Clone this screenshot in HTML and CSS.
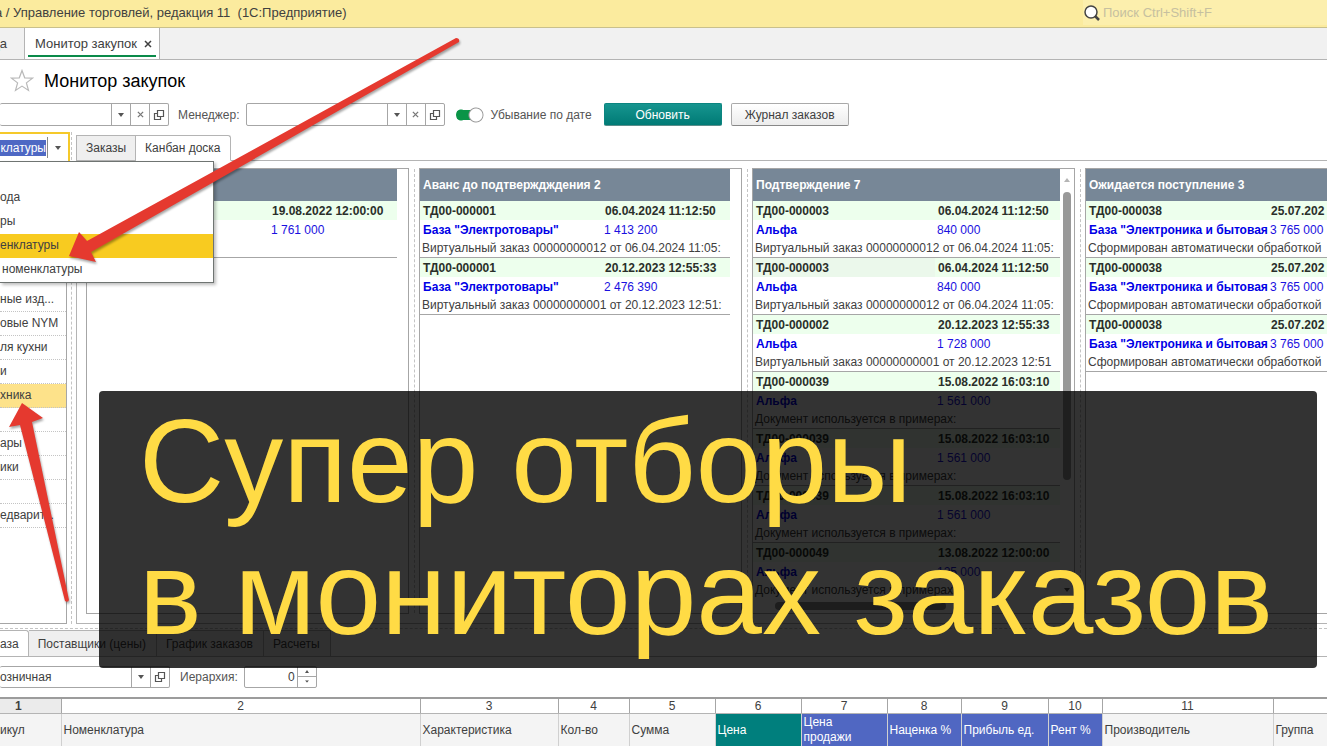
FILE: index.html
```html
<!DOCTYPE html>
<html lang="ru">
<head>
<meta charset="utf-8">
<title>Монитор закупок</title>
<link rel="stylesheet" href="styles.css">
</head>
<body>
<svg class="defs" width="0" height="0" aria-hidden="true">
  <symbol id="open" viewBox="0 0 12 12"><path d="M4.500 1.500h6v6h-6zM4 4.500H1.500v6h6V8" fill="none" stroke="#555" stroke-width="1.200"/></symbol>
  <symbol id="caret" viewBox="0 0 6 4"><path d="M0 0h6L3 4z" fill="#555"/></symbol>
  <symbol id="cross" viewBox="0 0 8 8"><path d="M1 1l6 6M7 1L1 7" stroke="currentColor" stroke-width="1.500" fill="none"/></symbol>
</svg>
<div class="app">
  <header class="titlebar">
    <span class="app-name">а / Управление торговлей, редакция 11&nbsp; (1С:Предприятие)</span>
    <label class="search">
      <svg width="18" height="18" viewBox="0 0 18 18"><circle cx="8" cy="8" r="6" fill="#fff" stroke="#444" stroke-width="1.500"/><path d="M12 12l4 4" stroke="#444" stroke-width="2.500"/></svg>
      <input type="text" placeholder="Поиск Ctrl+Shift+F" aria-label="Поиск">
    </label>
  </header>
  <nav class="windows">
    <button class="win">да</button>
    <button class="win current"><span>Монитор закупок</span><svg width="8" height="8"><use href="#cross"/></svg></button>
  </nav>
  <div class="heading">
    <svg width="24" height="24" viewBox="0 0 24 24"><path d="M12 1.500l2.700 7.300 7.800.3-6.100 4.800 2.100 7.500L12 17.100l-6.500 4.300 2.100-7.500-6.100-4.800 7.800-.3z" fill="#fff" stroke="#b9b9b9" stroke-width="1.200"/></svg>
    <h1>Монитор закупок</h1>
  </div>
  <div class="toolbar">
    <div class="combo order-combo"><input type="text" aria-label="Отбор"><button aria-label="Выбрать"><svg width="6" height="4"><use href="#caret"/></svg></button><button aria-label="Очистить"><svg width="7" height="7" viewBox="0 0 8 8"><use href="#cross"/></svg></button><button aria-label="Открыть"><svg width="12" height="12"><use href="#open"/></svg></button></div>
    <label for="manager">Менеджер:</label>
    <div class="combo manager-combo"><input type="text" id="manager"><button aria-label="Выбрать"><svg width="6" height="4"><use href="#caret"/></svg></button><button aria-label="Очистить"><svg width="7" height="7" viewBox="0 0 8 8"><use href="#cross"/></svg></button><button aria-label="Открыть"><svg width="12" height="12"><use href="#open"/></svg></button></div>
    <label class="toggle"><input type="checkbox" checked><span>Убывание по дате</span></label>
    <button class="btn primary">Обновить</button>
    <button class="btn">Журнал заказов</button>
  </div>

  <div class="work">
    <aside class="side">
      <div class="kind"><span class="picked">клатуры</span><button aria-label="Выбрать"><svg width="6" height="4"><use href="#caret"/></svg></button></div>
      <ul class="menu">
        <li></li><li>ода</li><li>ры</li><li class="on">енклатуры</li><li class="inset">номенклатуры</li>
      </ul>
      <ul class="list">
        <li>ные изд...</li><li>овые NYM</li><li>ля кухни</li><li>и</li><li class="on">хника</li><li></li><li>ары</li><li>ики</li><li></li><li>едварит...</li>
      </ul>
    </aside>
    <div class="split"></div>
    <main class="main">
      <div class="tabs"><button class="tab">Заказы</button><button class="tab current">Канбан доска</button></div>
      <div class="board">
        <section class="col">
          <div class="cards">
            <h2>&nbsp;</h2>
            <article class="card"><b></b><time>19.08.2022 12:00:00</time><strong></strong><em>1 761 000</em><p></p></article>
          </div>
        </section>
        <section class="col">
          <div class="cards">
            <h2>Аванс до подтверждждения 2</h2>
            <article class="card"><b>ТД00-000001</b><time>06.04.2024 11:12:50</time><strong>База "Электротовары"</strong><em>1 413 200</em><p>Виртуальный заказ 00000000012 от 06.04.2024 11:05:</p></article>
            <article class="card"><b>ТД00-000001</b><time>20.12.2023 12:55:33</time><strong>База "Электротовары"</strong><em>2 476 390</em><p>Виртуальный заказ 00000000001 от 20.12.2023 12:51:</p></article>
          </div>
        </section>
        <section class="col">
          <div class="cards">
            <h2>Подтверждение 7</h2>
            <article class="card"><b>ТД00-000003</b><time>06.04.2024 11:12:50</time><strong>Альфа</strong><em>840 000</em><p>Виртуальный заказ 00000000012 от 06.04.2024 11:05:</p></article>
            <article class="card active"><b>ТД00-000003</b><time>06.04.2024 11:12:50</time><strong>Альфа</strong><em>840 000</em><p>Виртуальный заказ 00000000012 от 06.04.2024 11:05:</p></article>
            <article class="card"><b>ТД00-000002</b><time>20.12.2023 12:55:33</time><strong>Альфа</strong><em>1 728 000</em><p>Виртуальный заказ 00000000001 от 20.12.2023 12:51</p></article>
            <article class="card"><b>ТД00-000039</b><time>15.08.2022 16:03:10</time><strong>Альфа</strong><em>1 561 000</em><p>Документ используется в примерах:</p></article>
            <article class="card"><b>ТД00-000039</b><time>15.08.2022 16:03:10</time><strong>Альфа</strong><em>1 561 000</em><p>Документ используется в примерах:</p></article>
            <article class="card"><b>ТД00-000039</b><time>15.08.2022 16:03:10</time><strong>Альфа</strong><em>1 561 000</em><p>Документ используется в примерах:</p></article>
            <article class="card last"><b>ТД00-000049</b><time>13.08.2022 12:00:00</time><strong>Альфа</strong><em>125 000</em><p>Документ используется в примерах:</p></article>
            <div class="hscroll"><i></i></div>
          </div>
          <div class="vscroll"><svg width="6" height="4" viewBox="0 0 6 4"><path d="M0 4h6L3 0z" fill="#b5b5b5"/></svg><i></i><svg width="6" height="4"><use href="#caret"/></svg></div>
        </section>
        <section class="col">
          <div class="cards">
            <h2>Ожидается поступление 3</h2>
            <article class="card"><b>ТД00-000038</b><time>25.07.202</time><strong>База "Электроника и бытовая</strong><em>3 765 000</em><p>Сформирован автоматически обработкой</p></article>
            <article class="card"><b>ТД00-000038</b><time>25.07.202</time><strong>База "Электроника и бытовая</strong><em>3 765 000</em><p>Сформирован автоматически обработкой</p></article>
            <article class="card"><b>ТД00-000038</b><time>25.07.202</time><strong>База "Электроника и бытовая</strong><em>3 765 000</em><p>Сформирован автоматически обработкой</p></article>
          </div>
        </section>
      </div>
    </main>
  </div>

  <div class="hsplit"></div>
  <div class="tabs lower"><button class="tab current">аза</button><button class="tab">Поставщики (цены)</button><button class="tab">График заказов</button><button class="tab">Расчеты</button></div>
  <div class="toolbar bottom">
    <div class="combo price-combo"><input type="text" value="озничная" aria-label="Вид цены"><button aria-label="Выбрать"><svg width="6" height="4"><use href="#caret"/></svg></button><button aria-label="Открыть"><svg width="12" height="12"><use href="#open"/></svg></button></div>
    <label for="level">Иерархия:</label>
    <div class="combo spin"><input type="text" id="level" value="0"><div class="steps"><button aria-label="Больше"><svg width="4" height="3" viewBox="0 0 4 3"><path d="M0 3h4L2 0z" fill="#555"/></svg></button><button aria-label="Меньше"><svg width="4" height="3" viewBox="0 0 6 4"><use href="#caret"/></svg></button></div></div>
  </div>
  <table class="goods">
    <colgroup><col class="c1"><col class="c2"><col class="c3"><col class="c4"><col class="c5"><col class="c5"><col class="c5"><col class="c8"><col class="c9"><col class="c10"><col class="c11"><col></colgroup>
    <thead>
      <tr class="nums"><th class="sel">1</th><th>2</th><th>3</th><th>4</th><th>5</th><th>6</th><th>7</th><th>8</th><th>9</th><th>10</th><th>11</th><th></th></tr>
      <tr class="names"><th class="first">икул</th><th>Номенклатура</th><th>Характеристика</th><th>Кол-во</th><th>Сумма</th><th class="teal">Цена</th><th class="blue">Цена<br>продажи</th><th class="blue">Наценка %</th><th class="blue">Прибыль ед.</th><th class="blue">Рент %</th><th>Производитель</th><th>Группа</th></tr>
    </thead>
  </table>

  <div class="banner">Супер отборы<br>в мониторах заказов</div>
  <svg class="arrows" width="480" height="620" viewBox="0 0 480 620" aria-hidden="true">
    <path d="M69 256L79 232L87 241L456 38Q460 38 459 42L91 252L96 262Z"/>
    <path d="M22 403L43 418L32 422L69 600Q68 603 65 601L20 425L9 427Z"/>
  </svg>
</div>
</body>
</html>
```
FILE: styles.css
```css
* { box-sizing: border-box; }
body {
  margin: 0;
  overflow-x: hidden;
  background: #fff;
  color: #404040;
  font: 12px/16px "Liberation Sans", Arial, sans-serif;
}
button, input { font: inherit; color: inherit; margin: 0; padding: 0; border: 0; background: none; }
input { outline: 0; min-width: 0; }
ul { list-style: none; margin: 0; padding: 0; }
.defs { position: absolute; }
.app { position: relative; overflow: hidden; min-height: 100vh; }

.titlebar {
  display: flex;
  align-items: center;
  justify-content: space-between;
  height: 28px;
  padding-bottom: 2px;
  background: #fbeb9e;
  border-bottom: 1px solid #c9c08c;
  font-size: 13px;
}
.app-name { margin-left: -5px; }
.search { display: flex; align-items: center; gap: 2px; width: 244px; height: 25px; background: #fcefad; }
.search input { flex: 1; }
.search input::placeholder { color: #c6c0a0; opacity: 1; }

.windows { display: flex; height: 32px; background: #f1f1f1; border-bottom: 1px solid #b4b4b4; font-size: 13px; }
.win { width: 25px; border-right: 1px solid #b4b4b4; overflow: hidden; text-align: right; padding-right: 17px; direction: rtl; }
.win.current {
  direction: ltr;
  display: flex;
  align-items: center;
  gap: 7px;
  width: auto;
  padding: 0 7px 0 10px;
  background: linear-gradient(#0a8a4a, #0a8a4a) 3px 27px / calc(100% - 6px) 2px no-repeat #fff;
}

.heading { display: flex; align-items: center; gap: 10px; height: 43px; padding: 0 0 2px 10px; }
h1 { margin: 0; font-size: 18px; line-height: 24px; font-weight: 400; color: #000; }

.toolbar { display: flex; align-items: center; height: 23px; color: #555; }
.toolbar label { white-space: nowrap; }
.combo { display: flex; height: 23px; border: 1px solid #a6a6a6; border-radius: 2px; background: #fff; color: #404040; }
.combo > input { flex: 1; }
.combo > button { width: 19px; border-left: 1px solid #a6a6a6; display: grid; place-items: center; color: #777; }
.order-combo, .price-combo { width: 170px; border-left: 0; margin-right: 10px; }
.order-combo { width: 169px; margin-right: 9px; }
.manager-combo { width: 199px; margin: 0 11px 0 6px; }
.toggle { display: flex; align-items: center; gap: 7px; margin-right: 12px; }
.toggle input {
  appearance: none;
  width: 28px;
  height: 16px;
  border-radius: 8px;
  background:
    radial-gradient(circle at 20px 8px, #fff 6px, #999 7px, #999 7px, transparent 8px),
    linear-gradient(#0a9447, #0a9447) 4px 3px / 14px 10px no-repeat,
    radial-gradient(circle at 5px 8px, #0a9447 5px, transparent 6px);
}
.btn { min-width: 118px; height: 23px; border: 1px solid #a9a9a9; border-bottom-color: #888; border-radius: 2px; background: linear-gradient(#fff, #ececec); color: #404040; }
.btn.primary { background: linear-gradient(#16958f, #007a75); border-color: #0b8580; border-bottom-color: #5a8d8a; color: #fff; margin-right: 9px; }

.work { display: flex; margin-top: 6px; }
.side { position: relative; flex: 0 0 67px; min-width: 0; display: flex; flex-direction: column; }
.kind { display: flex; align-items: center; align-self: flex-start; width: 70px; height: 29px; border: solid #f5c92a; border-width: 2px 2px 0 0; }
.picked { background: #4e68c4; color: #fff; width: 46px; overflow: hidden; direction: rtl; line-height: 16px; }
.kind button { width: 21px; height: 21px; margin-left: 1px; border-left: 1px solid #888; display: grid; place-items: center; }
.menu { position: absolute; top: 29px; left: 0; z-index: 2; width: 214px; background: #fff; border: 1px solid #6f7472; border-left: 0; box-shadow: 2px 2px 3px rgba(0, 0, 0, .25); }
.menu li, .list li { height: 24px; line-height: 23px; white-space: nowrap; }
.menu .on { background: #f8cb20; }
.menu .inset { padding-left: 2px; }
.list { flex: 1; margin-top: 6px; padding-top: 120px; border: solid #a6a6a6; border-width: 1px 1px 1px 0; }
.list li { border-bottom: 1px dotted #c4c4c4; }
.list .on { background: #fde28a; }
.split { flex: 0 0 5px; border-left: 1px dashed #c4c4c4; margin-left: 4px; }

.main { flex: 1; min-width: 0; padding-top: 3px; }
.tabs { display: flex; }
.tab { height: 26px; padding: 0 9px; border: 1px solid #b4b4b4; border-left-width: 0; background: #efefef; white-space: nowrap; }
.tab:first-child { border-left-width: 1px; }
.tab.current { background: #fff; border-bottom-color: #fff; border-top-right-radius: 3px; }
.board { display: flex; gap: 10px; margin-top: -1px; padding: 7px 0 9px 9px; border: 1px solid #b4b4b4; border-right: 0; overflow: hidden; }
.col { position: relative; flex: 1 0 323px; display: flex; border: 1px solid #a6a6a6; padding-right: 11px; }
.col:has(.vscroll) { padding-right: 0; }
.col + .col::before { content: ""; position: absolute; top: 0; bottom: 0; left: -6px; border-left: 1px dashed #c4c4c4; }
.cards { flex: 1; min-width: 0; }
h2 { margin: 0; height: 32px; padding-left: 3px; background: #778797; color: #fff; font-size: 12px; line-height: 32px; }
.card {
  display: grid;
  grid-template-columns: 182px 1fr;
  grid-template-rows: 19px 19px 18px;
  align-items: center;
  border-bottom: 1px solid #a6a6a6;
  background: linear-gradient(#edffed, #edffed) 0 0 / 100% 19px no-repeat;
  line-height: 18px;
  white-space: nowrap;
}
.card.active { background-image: linear-gradient(90deg, #ebf8eb 182px, #edffed 182px); }
.card b, .card strong { padding-left: 3px; }
.card b, .card time { font-weight: 700; color: #2a2f2a; }
.card time { padding-left: 3px; }
.card strong { color: #0000e6; }
.card em { font-style: normal; color: #1a10e0; padding-left: 2px; }
.card p { grid-column: 1 / 3; margin: 0; padding-left: 2px; }
.card.last { border-bottom: 0; }
.hscroll { height: 14px; padding: 3px 0 0 22px; }
.hscroll i { display: block; width: 60%; height: 8px; border-radius: 4px; background: #8f8f8f; }
.vscroll { flex: 0 0 14px; display: flex; flex-direction: column; align-items: center; padding: 9px 0 21px; }
.vscroll i { width: 8px; height: 288px; margin: 10px 0 auto; border-radius: 4px; background: #999; }

.hsplit { height: 6px; margin-top: 4px; border-top: 1px dashed #c4c4c4; margin-bottom: -4px; }
.lower { border-bottom: 1px solid #b4b4b4; }
.lower .tab { padding: 0 10px 0 9px; border-bottom: 0; }
.lower .tab:first-child { border-left: 0; padding: 0 9px 0 0; }
.bottom { margin-top: 8px; }
.bottom .combo { height: 22px; }
.spin { width: 73px; margin-left: 6px; }
.spin input { text-align: right; padding-right: 2px; }
.steps { width: 19px; display: grid; border-left: 1px solid #a6a6a6; }
.steps button { display: grid; place-items: center; }
.steps button + button { border-top: 1px solid #a6a6a6; }

.goods { width: 100%; table-layout: fixed; border-collapse: collapse; margin-top: 9px; border-top: 2px solid #9c9c9c; }
.goods th { font-weight: 400; padding: 0 2px; border-right: 1px solid #a6a6a6; }
.goods th:last-child { border-right: 0; }
.goods .nums th { height: 15px; line-height: 14px; border-bottom: 1px solid #b4b4b4; }
.goods .nums .sel { font-weight: 700; background: #ebebeb; padding-right: 26px; }
.goods .names th { height: 33px; line-height: 15px; text-align: left; background: #f4f4f4; border-right-color: #d0d0d0; }
.goods .names .first { padding-left: 0; }
.goods .names .teal { background: #007f7d; color: #fff; }
.goods .names .blue { background: #5067c2; color: #fff; }
.c1 { width: 61px; }
.c2 { width: 359px; }
.c3 { width: 138px; }
.c4 { width: 71px; }
.c5 { width: 86px; }
.c8 { width: 74px; }
.c9 { width: 87px; }
.c10 { width: 54px; }
.c11 { width: 171px; }

.banner {
  position: absolute;
  z-index: 3;
  top: 391px;
  left: 99px;
  right: 10px;
  padding: 4px 0 9px 40px;
  border-radius: 4px;
  background: rgba(0, 0, 0, .8);
  color: #ffdb45;
  font-size: 118px;
  line-height: 132px;
  white-space: nowrap;
}
.arrows { position: absolute; z-index: 4; top: 0; left: 0; pointer-events: none; fill: #e5392f; filter: drop-shadow(1px 2px 1px rgba(0, 0, 0, .35)); }
```
